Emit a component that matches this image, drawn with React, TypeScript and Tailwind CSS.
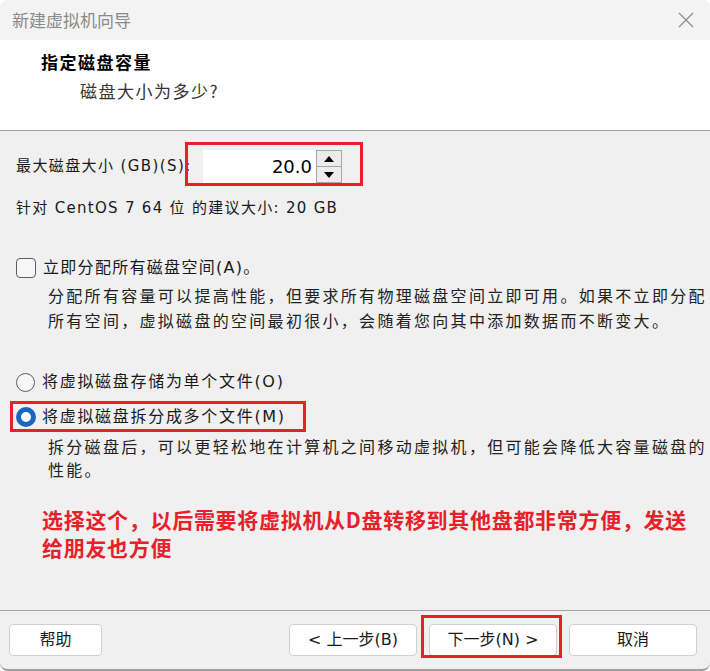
import React from 'react';

const font = "font-['DejaVu_Sans','Noto_Sans_CJK_SC',sans-serif]";

const Button = ({ label, className = '' }: { label: string; className?: string }) => (
  <button
    className={`h-[32px] rounded-[4px] border border-[#d0d0d0] bg-white text-[16px] text-[#1a1a1a] ${className}`}
  >
    {label}
  </button>
);

const SpinBox = () => (
  <div className="flex h-[33px]">
    <div className="flex w-[113px] items-center justify-end bg-white pr-[4px] text-[18px] text-black">
      20.0
    </div>
    <div className="flex w-[26px] flex-col border border-[#a6a6a6]">
      <div className="flex flex-1 items-center justify-center border-b border-[#a6a6a6] bg-[#ececec]">
        <svg width="10" height="6" viewBox="0 0 10 6">
          <path d="M0 6 L5 0 L10 6 Z" fill="#000" />
        </svg>
      </div>
      <div className="flex flex-1 items-center justify-center bg-[#ececec]">
        <svg width="10" height="6" viewBox="0 0 10 6">
          <path d="M0 0 L5 6 L10 0 Z" fill="#000" />
        </svg>
      </div>
    </div>
  </div>
);

export default function App() {
  return (
    <div className={`h-[671px] w-[710px] overflow-hidden bg-white ${font}`}>
      <div className="flex h-full flex-col rounded-t-[8px] rounded-b-[8px] border-b-2 border-[#9c9c9c] bg-[#f0f0f0]">
        {/* title bar */}
        <div className="flex h-[40px] items-center justify-between rounded-t-[8px] bg-[#f3f3f3] pl-[12px] pr-[16px]">
          <span className="font-['Noto_Sans_CJK_SC',sans-serif] text-[17px] text-[#8a8a8a]">新建虚拟机向导</span>
          <svg width="16" height="16" viewBox="0 0 16 16">
            <path d="M1 1 L15 15 M15 1 L1 15" stroke="#8a8a8a" strokeWidth="1.2" />
          </svg>
        </div>

        {/* header */}
        <div className="h-[91px] border-b border-[#a0a0a0] bg-white pl-[41px] pt-[11px] font-['Noto_Sans_CJK_SC',sans-serif]">
          <div className="text-[17px] font-bold leading-[22px] tracking-[1.5px] text-black">指定磁盘容量</div>
          <div className="mt-[7px] pl-[39px] text-[17px] leading-[22px] tracking-[1.5px] text-[#333]">磁盘大小为多少?</div>
        </div>

        {/* body */}
        <div className="flex flex-col px-[16px] text-[#1a1a1a]">
          <div className="relative mt-[19px] flex items-center whitespace-nowrap">
            <span className="w-[187px] text-[15px] tracking-[1.4px]">最大磁盘大小 (GB)(S):</span>
            <SpinBox />
            <div className="pointer-events-none absolute left-[169px] top-[-8px] h-[44px] w-[178px] border-[3px] border-[#e8202a]" />
          </div>

          <div className="mt-[15px] whitespace-nowrap text-[15px] leading-[20px] tracking-[1.3px]">
            针对 CentOS 7 64 位 的建议大小: 20 GB
          </div>

          <div className="mt-[40px] flex h-[20px] items-center whitespace-nowrap">
            <div className="h-[20px] w-[20px] rounded-[4px] border-[1.5px] border-[#5c5c5c] bg-[#f6f6f6]" />
            <span className="ml-[7px] text-[16px] tracking-[1.3px]">立即分配所有磁盘空间(A)。</span>
          </div>

          <div className="mt-[6px] whitespace-nowrap pl-[32px] text-[16px] leading-[25px] tracking-[2.3px] text-[#222]">
            分配所有容量可以提高性能，但要求所有物理磁盘空间立即可用。如果不立即分配
            <br />
            所有空间，虚拟磁盘的空间最初很小，会随着您向其中添加数据而不断变大。
          </div>

          <div className="mt-[37px] flex h-[22px] items-center whitespace-nowrap">
            <div className="h-[19px] w-[19px] rounded-full border-[1.5px] border-[#5c5c5c] bg-[#f6f6f6]" />
            <span className="ml-[7px] text-[16px] tracking-[1.7px]">将虚拟磁盘存储为单个文件(O)</span>
          </div>

          <div className="relative mt-[13px] flex h-[22px] items-center whitespace-nowrap">
            <div className="h-[20px] w-[20px] rounded-full border-[5px] border-[#1866c0] bg-white" />
            <span className="ml-[6px] text-[16px] tracking-[1.7px]">将虚拟磁盘拆分成多个文件(M)</span>
            <div className="pointer-events-none absolute left-[-6px] top-[-5px] h-[31px] w-[296px] border-[3px] border-[#e8202a]" />
          </div>

          <div className="mt-[8px] whitespace-nowrap pl-[32px] text-[16px] leading-[23px] tracking-[2.3px] text-[#222]">
            拆分磁盘后，可以更轻松地在计算机之间移动虚拟机，但可能会降低大容量磁盘的
            <br />
            性能。
          </div>

          <div className="mt-[23px] whitespace-nowrap pl-[26px] font-['Noto_Sans_CJK_SC',sans-serif] text-[21px] font-bold leading-[28px] tracking-[0.7px] text-[#e8202a]">
            选择这个，以后需要将虚拟机从D盘转移到其他盘都非常方便，发送
            <br />
            给朋友也方便
          </div>
        </div>

        {/* footer */}
        <div className="mt-auto flex h-[59px] border-t border-[#a6a6a6] pl-[9px] pr-[13px] pt-[13px]">
          <Button label="帮助" className="w-[93px]" />
          <div className="ml-auto flex gap-[12px]">
            <Button label="< 上一步(B)" className="w-[128px]" />
            <div className="relative">
              <Button label="下一步(N) >" className="w-[128px]" />
              <div className="pointer-events-none absolute left-[-8px] top-[-9px] h-[43px] w-[141px] border-[3px] border-[#e8202a]" />
            </div>
            <Button label="取消" className="w-[128px]" />
          </div>
        </div>
      </div>
    </div>
  );
}
